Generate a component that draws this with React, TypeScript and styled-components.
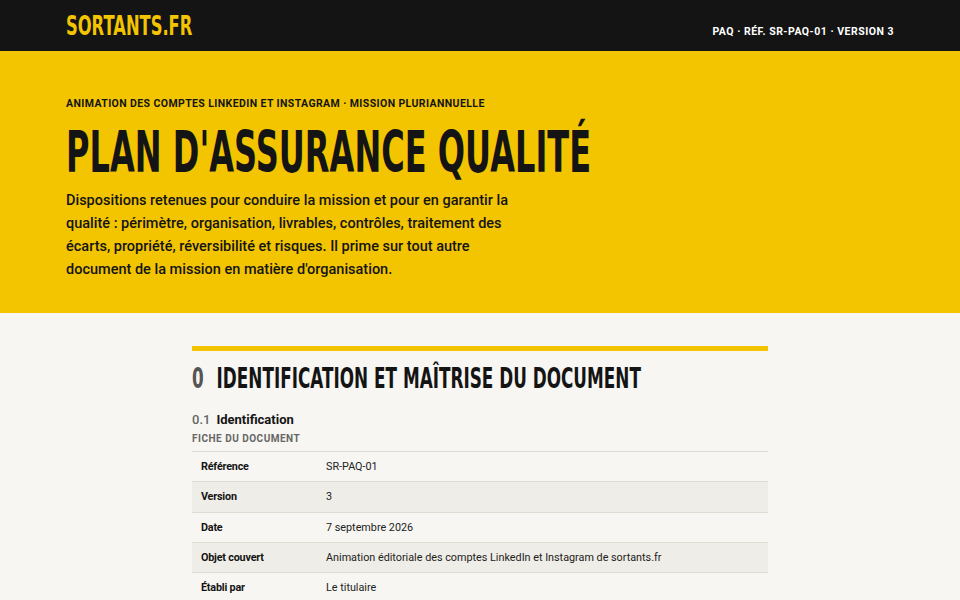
import styled, { createGlobalStyle } from 'styled-components';

const YELLOW = '#f3c400';
const INK = '#141414';
const PAPER = '#f7f6f2';

const GlobalStyle = createGlobalStyle`
	body {
		margin: 0;
		background: ${PAPER};
		color: ${INK};
		font-family: Roboto, 'Liberation Sans', Arial, sans-serif;
	}
`;

// heavy display lettering, stretched tall and narrow into a condensed face
const Squeeze = styled.span<{ $x: number; $y: number }>`
	display: inline-block;
	font-family: 'DejaVu Sans', sans-serif;
	font-weight: 700;
	text-transform: uppercase;
	white-space: nowrap;
	line-height: 1;
	transform: scale(${(p) => p.$x}, ${(p) => p.$y});
	transform-origin: left center;
`;

const TopBar = styled.header`
	height: 51px;
	box-sizing: border-box;
	background: ${INK};
	display: flex;
	align-items: flex-end;
	justify-content: space-between;
	padding: 0 66px 14px;
`;

const Logo = styled.div`
	color: ${YELLOW};
	font-size: 20px;
	height: 20px;
	margin-bottom: 3px;
`;

const DocRef = styled.div`
	color: #ffffff;
	font-size: 10.5px;
	line-height: 12px;
	font-weight: 700;
	letter-spacing: 0.5px;
	margin-bottom: -1px;
`;

const Hero = styled.section`
	background: ${YELLOW};
	padding: 47px 66px 32px;
`;

const Eyebrow = styled.div`
	font-size: 10.5px;
	line-height: 12px;
	font-weight: 700;
	letter-spacing: 0.4px;
	text-transform: uppercase;
`;

const Title = styled.h1`
	font-size: 44px;
	line-height: 44px;
	height: 44px;
	margin: 20px 0 15px;
	font-weight: 700;
`;

const Lead = styled.p`
	font-size: 14.5px;
	font-weight: 500;
	line-height: 23px;
	max-width: 450px;
	margin: 0;
`;

const Main = styled.main`
	width: 576px;
	margin: 0 auto;
	padding-top: 33px;
`;

const SectionHead = styled.h2`
	border-top: 5px solid ${YELLOW};
	margin: 0;
	padding-top: 18px;
	font-size: 21px;
	height: 21px;
	line-height: 21px;
`;

const SectionNum = styled.span`
	color: #555555;
	margin-right: 16px;
`;

const SubHead = styled.h3`
	font-size: 13px;
	line-height: 16px;
	font-weight: 700;
	margin: 22px 0 0;
	display: flex;
	gap: 6px;
`;

const SubNum = styled.span`
	color: #666;
	font-weight: 500;
`;

const Caption = styled.div`
	font-size: 10px;
	line-height: 12px;
	font-weight: 700;
	color: #666;
	letter-spacing: 0.5px;
	text-transform: uppercase;
	margin: 5px 0 6px;
`;

const Sheet = styled.table`
	width: 100%;
	border-collapse: collapse;
	table-layout: fixed;
	font-size: 10.8px;
`;

const Row = styled.tr<{ $shaded: boolean }>`
	background: ${(p) => (p.$shaded ? '#efede7' : 'transparent')};
	border-top: 1px solid #dedbd3;
`;

const Key = styled.th`
	box-sizing: border-box;
	width: 134px;
	height: 29.3px;
	text-align: left;
	font-weight: 700;
	letter-spacing: -0.2px;
	padding: 0 9px;
`;

const Value = styled.td`
	height: 29.3px;
	padding: 0;
	color: #222;
`;

const fiche: [string, string][] = [
	['Référence', 'SR-PAQ-01'],
	['Version', '3'],
	['Date', '7 septembre 2026'],
	['Objet couvert', 'Animation éditoriale des comptes LinkedIn et Instagram de sortants.fr'],
	['Établi par', 'Le titulaire'],
];

const App = () => {
	return (
		<>
			<GlobalStyle />
			<TopBar>
				<Logo>
					<Squeeze $x={0.815} $y={1.3}>sortants.fr</Squeeze>
				</Logo>
				<DocRef>PAQ · RÉF. SR-PAQ-01 · VERSION 3</DocRef>
			</TopBar>
			<Hero>
				<Eyebrow>Animation des comptes LinkedIn et Instagram · mission pluriannuelle</Eyebrow>
				<Title>
					<Squeeze $x={0.729} $y={1.31}>Plan d'assurance qualité</Squeeze>
				</Title>
				<Lead>
					Dispositions retenues pour conduire la mission et pour en garantir la qualité : périmètre,
					organisation, livrables, contrôles, traitement des écarts, propriété, réversibilité et
					risques. Il prime sur tout autre document de la mission en matière d'organisation.
				</Lead>
			</Hero>
			<Main>
				<SectionHead>
					<Squeeze $x={0.802} $y={1.37}>
						<SectionNum>0</SectionNum>
						Identification et maîtrise du document
					</Squeeze>
				</SectionHead>
				<SubHead>
					<SubNum>0.1</SubNum>
					Identification
				</SubHead>
				<Caption>Fiche du document</Caption>
				<Sheet>
					<tbody>
						{fiche.map(([k, v], i) => (
							<Row key={k} $shaded={i % 2 === 1}>
								<Key>{k}</Key>
								<Value>{v}</Value>
							</Row>
						))}
					</tbody>
				</Sheet>
			</Main>
		</>
	);
};

export default App;
